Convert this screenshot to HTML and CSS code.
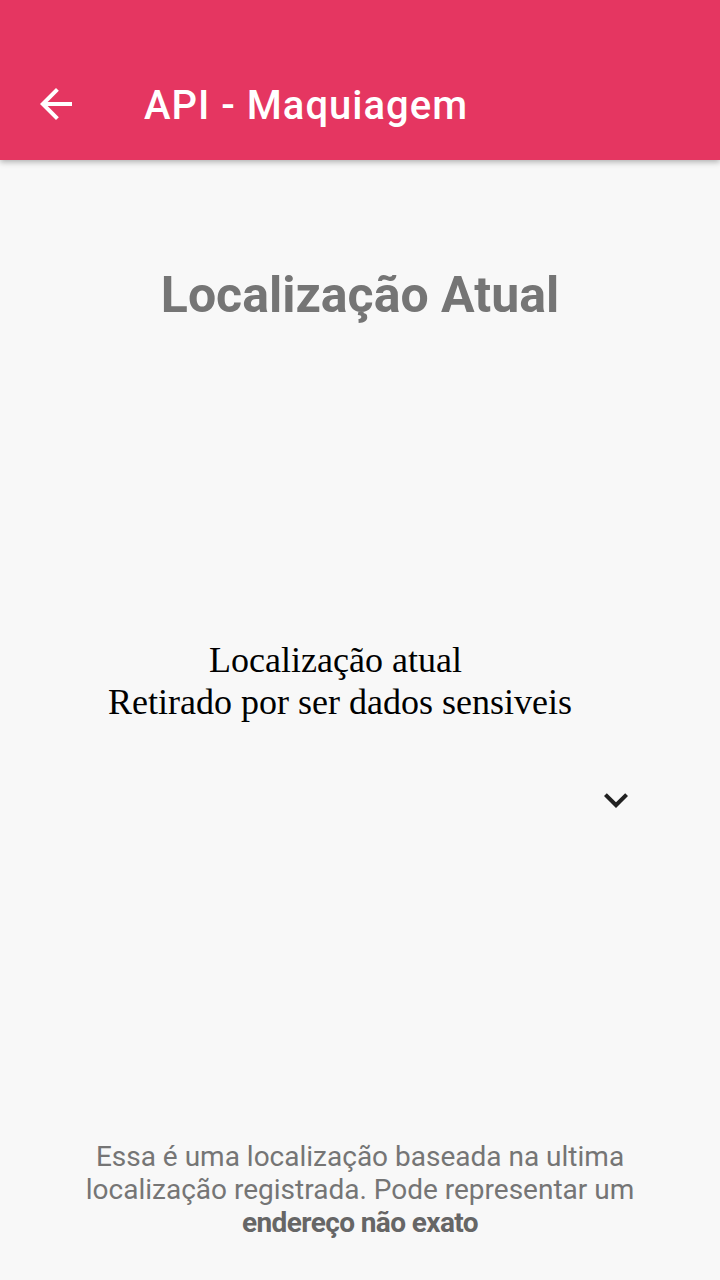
FILE: index.html
```html
<!DOCTYPE html>
<html lang="pt">
<head>
<meta charset="utf-8">
<link rel="stylesheet" href="styles.css">
</head>
<body>
<div class="app">
  <header class="toolbar">
    <button class="back" aria-label="Voltar">
      <svg viewBox="0 0 24 24" width="48" height="48"><path d="M20 11H7.83l5.59-5.59L12 4l-8 8 8 8 1.41-1.41L7.83 13H20v-2z" fill="#fff"/></svg>
    </button>
    <h1 class="title">API - Maquiagem</h1>
  </header>
  <main class="content">
    <h2 class="heading">Localização Atual</h2>
    <div class="webview">
      <p>Localização atual&nbsp;<br>Retirado por ser dados sensiveis</p>
    </div>
    <div class="expand">
      <svg viewBox="0 0 24 24" width="48" height="48"><path d="M7.41 8.59L12 13.17l4.59-4.58L18 10l-6 6-6-6 1.41-1.41z" fill="#212121"/></svg>
    </div>
    <p class="note">Essa é uma localização baseada na ultima localização registrada. Pode representar um <b>endereço não exato</b></p>
  </main>
</div>
</body>
</html>
```
FILE: styles.css
```css
html, body {
  margin: 0;
  padding: 0;
}
body {
  width: 720px;
  height: 1280px;
  background: #f8f8f8;
  font-family: Roboto, "Noto Sans", sans-serif;
  overflow: hidden;
}
.app {
  display: flex;
  flex-direction: column;
  height: 1280px;
}
.toolbar {
  height: 112px;
  padding-top: 48px;
  background: #e53661;
  display: flex;
  align-items: center;
  box-shadow: 0 2px 6px rgba(0,0,0,0.3);
  position: relative;
  z-index: 1;
  flex: none;
}
.back {
  width: 48px;
  height: 48px;
  margin-left: 32px;
  padding: 0;
  border: 0;
  background: none;
  display: flex;
}
.title {
  margin: 3px 0 0 64px;
  color: #fff;
  font-weight: 500;
  font-size: 40px;
  letter-spacing: 1px;
}
.content {
  flex: 1;
  display: flex;
  flex-direction: column;
  align-items: center;
}
.heading {
  margin: 107px 0 0;
  font-size: 50px;
  font-weight: 700;
  color: #757575;
  line-height: 56px;
}
.webview {
  margin-top: 316px;
  width: 100%;
  box-sizing: border-box;
  padding-right: 40px;
  text-align: center;
}
.webview p {
  margin: 0;
  font-family: "Liberation Serif", "Times New Roman", serif;
  font-size: 36px;
  color: #000;
}
.expand {
  align-self: flex-end;
  margin: 53px 80px 0 0;
  width: 48px;
  height: 48px;
}
.expand svg { display: block; }
.note {
  margin: auto 0 41px;
  padding: 0 80px;
  text-align: center;
  font-size: 28px;
  line-height: 33px;
  color: #757575;
}
.note b {
  font-weight: 700;
  letter-spacing: -0.6px;
  color: #666;
}
```
